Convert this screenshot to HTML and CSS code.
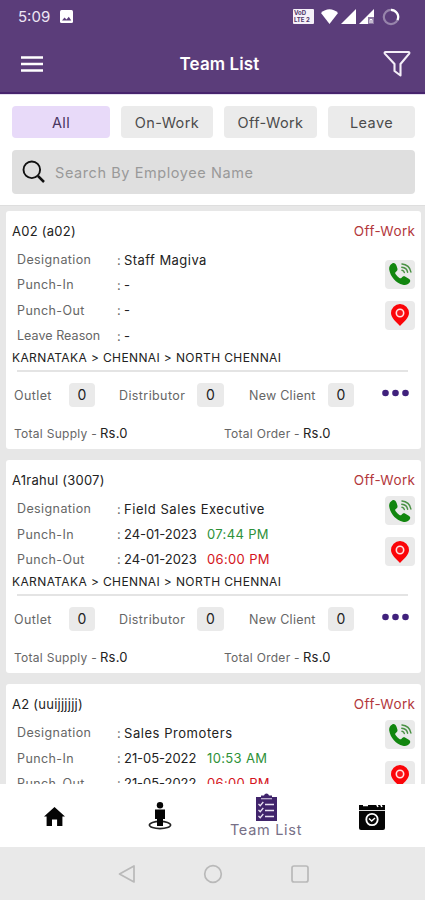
FILE: index.html
```html
<!DOCTYPE html>
<html lang="en">
<head>
<meta charset="UTF-8" />
<meta name="viewport" content="width=device-width, initial-scale=1" />
<title>Team List</title>
<link rel="stylesheet" href="styles.css">
</head>
<body>
  <!-- Shared icons -->
  <svg class="sprite" aria-hidden="true">
    <symbol id="icon-phone" viewBox="0 0 24 24">
      <path fill="#12860f" d="M4.200 1.400C6 .6 7.800 1.500 8.600 4l.8 2.600c.4 1.600-.2 2.600-1.900 3.600-.5.500-.3 1.200.2 2.100 1 1.600 2.200 2.800 3.700 3.700.9.500 1.500.5 2-.1 1.200-1.700 2.500-2.100 4-1.200l3.400 2c1.600 1 1.900 2.300.8 3.900-1.500 2.100-4 2.800-6.800 2.100C8.300 21.600 2.200 14.500 1.200 7.500.8 4.800 2 2.500 4.200 1.400z"/>
      <path fill="none" stroke="#4a9144" stroke-width="1.500" stroke-linecap="round" d="M14 2c4.600.2 8.300 3.600 8.900 8M13.800 5.200c3 .2 5.300 2.300 5.800 5M14 8.300c1.300.2 2.100 1 2.300 2.200"/>
    </symbol>
    <symbol id="icon-pin" viewBox="0 0 18 22">
      <path fill="#fb0509" d="M9 0a9 9 0 0 0-9 9c0 5 5.500 9 9 13 3.500-4 9-8 9-13a9 9 0 0 0-9-9z"/>
      <circle cx="9" cy="9" r="3.700" fill="#fb1519" stroke="#ffe2e2" stroke-width="1.600"/>
    </symbol>
    <symbol id="icon-dots" viewBox="0 0 27 8">
      <g fill="#40217c"><circle cx="3.500" cy="4" r="3.300"/><circle cx="13.500" cy="4" r="3.300"/><circle cx="23.500" cy="4" r="3.300"/></g>
    </symbol>
  </svg>

  <header class="app-header">
    <div class="status-bar">
      <span class="clock">5:09</span>
      <svg class="status-image" viewBox="0 0 13 13">
        <rect width="13" height="13" rx="1.500" fill="#fff"/>
        <path d="M2 10.500l2.500-3 2 1.900 2.300-2.600 2.500 3.700z" fill="#5b3d7a"/>
      </svg>
      <div class="status-icons">
        <div class="volte"><span>VoD</span><span>LTE 2</span></div>
        <svg width="17" height="15" viewBox="0 0 17 15"><path d="M0 4C5-.9 12-.9 17 4L8.500 15z" fill="#fff"/></svg>
        <svg width="15" height="15" viewBox="0 0 15 15"><path d="M15 0v15H0z" fill="#fff"/></svg>
        <svg width="16" height="15" viewBox="0 0 16 15"><path d="M15 0v15H0z" fill="#fff"/><path d="M9 8h6v7H9z" fill="#8d78a3"/><path d="M11 14v-3.500h2V14" fill="none" stroke="#fff"/></svg>
        <svg class="spinner" width="18" height="18" viewBox="0 0 18 18"><circle cx="9" cy="9" r="7.200" fill="none" stroke="#9784ab" stroke-width="2.200"/><path d="M9 1.800A7.200 7.200 0 0 1 15.500 12" fill="none" stroke="#fff" stroke-width="2.200"/></svg>
      </div>
    </div>
    <div class="title-bar">
      <button class="icon-btn" aria-label="Menu">
        <svg width="22" height="16" viewBox="0 0 22 16"><path d="M0 1.500h22M0 8h22M0 14.500h22" stroke="#fff" stroke-width="2.300"/></svg>
      </button>
      <h1>Team List</h1>
      <button class="icon-btn" aria-label="Filter">
        <svg width="28" height="28" viewBox="0 0 28 28"><path d="M2.500 2h23c.7 0 1.200.9.700 1.600L17.500 14v11.500L11.500 21v-7L1.800 3.600C1.300 2.900 1.800 2 2.500 2z" fill="none" stroke="#f4eef8" stroke-width="2.100" stroke-linejoin="round"/></svg>
      </button>
    </div>
  </header>

  <section class="filters">
    <div class="chips">
      <button class="chip active">All</button>
      <button class="chip">On-Work</button>
      <button class="chip">Off-Work</button>
      <button class="chip">Leave</button>
    </div>
    <div class="search">
      <svg width="24" height="24" viewBox="0 0 24 24"><circle cx="9.800" cy="9.800" r="8.300" fill="none" stroke="#111" stroke-width="1.900"/><path d="M16 16l6 6" stroke="#111" stroke-width="2.500"/></svg>
      <span>Search By Employee Name</span>
    </div>
  </section>

  <main class="team-list">
    <article class="card">
      <div class="card-head"><h2>A02 (a02)</h2><span class="status">Off-Work</span></div>
      <div class="card-body">
        <dl class="details">
          <dt>Designation</dt><dd><b>Staff Magiva</b></dd>
          <dt>Punch-In</dt><dd><b>-</b></dd>
          <dt>Punch-Out</dt><dd><b>-</b></dd>
          <dt class="tight">Leave Reason</dt><dd><b>-</b></dd>
        </dl>
        <div class="actions">
          <button class="action"><svg width="24" height="24"><use href="#icon-phone"/></svg></button>
          <button class="action"><svg width="18" height="22"><use href="#icon-pin"/></svg></button>
        </div>
      </div>
      <p class="region">KARNATAKA &gt; CHENNAI &gt; NORTH CHENNAI</p>
      <hr>
      <div class="stats">
        <span>Outlet</span><b>0</b>
        <span>Distributor</span><b>0</b>
        <span>New Client</span><b>0</b>
        <svg class="more" width="27" height="8"><use href="#icon-dots"/></svg>
      </div>
      <div class="totals">
        <p><span>Total Supply -</span> <b>Rs.0</b></p>
        <p class="order"><span>Total Order -</span> <b>Rs.0</b></p>
      </div>
    </article>

    <article class="card">
      <div class="card-head"><h2>A1rahul (3007)</h2><span class="status">Off-Work</span></div>
      <div class="card-body">
        <dl class="details">
          <dt>Designation</dt><dd><b class="wide">Field Sales Executive</b></dd>
          <dt>Punch-In</dt><dd><b class="date">24-01-2023</b><span class="time in">07:44 PM</span></dd>
          <dt>Punch-Out</dt><dd><b class="date">24-01-2023</b><span class="time out">06:00 PM</span></dd>
        </dl>
        <div class="actions">
          <button class="action"><svg width="24" height="24"><use href="#icon-phone"/></svg></button>
          <button class="action"><svg width="18" height="22"><use href="#icon-pin"/></svg></button>
        </div>
      </div>
      <p class="region">KARNATAKA &gt; CHENNAI &gt; NORTH CHENNAI</p>
      <hr>
      <div class="stats">
        <span>Outlet</span><b>0</b>
        <span>Distributor</span><b>0</b>
        <span>New Client</span><b>0</b>
        <svg class="more" width="27" height="8"><use href="#icon-dots"/></svg>
      </div>
      <div class="totals">
        <p><span>Total Supply -</span> <b>Rs.0</b></p>
        <p class="order"><span>Total Order -</span> <b>Rs.0</b></p>
      </div>
    </article>

    <article class="card">
      <div class="card-head"><h2>A2 (uuijjjjjj)</h2><span class="status">Off-Work</span></div>
      <div class="card-body">
        <dl class="details">
          <dt>Designation</dt><dd><b class="wide">Sales Promoters</b></dd>
          <dt>Punch-In</dt><dd><b class="date">21-05-2022</b><span class="time in">10:53 AM</span></dd>
          <dt>Punch-Out</dt><dd><b class="date">21-05-2022</b><span class="time out">06:00 PM</span></dd>
        </dl>
        <div class="actions">
          <button class="action"><svg width="24" height="24"><use href="#icon-phone"/></svg></button>
          <button class="action"><svg width="18" height="22"><use href="#icon-pin"/></svg></button>
        </div>
      </div>
    </article>
  </main>

  <nav class="tab-bar">
    <a class="tab"><svg width="21" height="19" viewBox="0 0 21 19"><path d="M10.500 0L21 9.500h-2.600V19h-5.300v-6.500H8V19H2.600V9.500H0z" fill="#050505"/></svg></a>
    <a class="tab"><svg width="24" height="28" viewBox="0 0 24 28">
      <ellipse cx="12" cy="23" rx="10.600" ry="3.600" fill="none" stroke="#222" stroke-width="1.600"/>
      <circle cx="12" cy="3.300" r="3.200" fill="#050505"/><path d="M7 7.500h10V17h-2v7H9v-7H7z" fill="#050505"/>
    </svg></a>
    <a class="tab current">
      <svg width="21" height="28" viewBox="0 0 21 28">
        <path d="M0 4h5V2.500h3a2.600 2.600 0 0 1 5 0h3V4h5v24H0z" fill="#40246b"/>
        <path d="M5 5.700h11" stroke="#c6bad4" stroke-width="1.200"/>
        <path d="M9 11.500h9M9 17.500h9M9 23.500h9" stroke="#e9e2f2" stroke-width="1.500"/>
        <path d="M2.500 11l1.700 1.700L7.300 9M2.500 17l1.700 1.700L7.300 15M2.500 23l1.700 1.700L7.300 21" fill="none" stroke="#e9e2f2" stroke-width="1.300"/>
      </svg>
      <span>Team List</span>
    </a>
    <a class="tab"><svg width="26" height="27" viewBox="0 0 26 27">
      <path d="M0 2h26v23a2 2 0 0 1-2 2H2a2 2 0 0 1-2-2z" fill="#050505"/>
      <path d="M0 7.500h26" stroke="#ddd" stroke-width="1"/>
      <path d="M4 2.500h5M17 0l2 4M21 0l2 4" stroke="#fff" stroke-width="1.600"/>
      <circle cx="13" cy="16.500" r="5.700" fill="none" stroke="#fff" stroke-width="1.800"/>
      <path d="M10 15.500l2.700 2.500 3.300-3" fill="none" stroke="#fff" stroke-width="1.500"/>
    </svg></a>
  </nav>

  <footer class="system-nav">
    <svg width="18" height="20" viewBox="0 0 18 20"><path d="M16 2v16L1.500 10z" fill="none" stroke="#b9b9b9" stroke-width="1.700" stroke-linejoin="round"/></svg>
    <svg width="20" height="20" viewBox="0 0 20 20"><circle cx="10" cy="10" r="8.300" fill="none" stroke="#b9b9b9" stroke-width="1.700"/></svg>
    <svg width="20" height="20" viewBox="0 0 20 20"><rect x="2" y="2" width="16" height="16" rx="2" fill="none" stroke="#b9b9b9" stroke-width="1.700"/></svg>
  </footer>
</body>
</html>
```
FILE: styles.css
```css
/* Reset & base */
*, *::before, *::after {
  box-sizing: border-box;
}

body {
  margin: 0;
  height: 900px;
  display: flex;
  flex-direction: column;
  overflow: hidden;
  font-family: Inter, 'Open Sans', sans-serif;
  font-size: 12px;
  color: #222;
  background: #e7e7e7;
}

h1, h2, p, dl, dd {
  margin: 0;
}

b {
  font-weight: 400;
}

svg {
  display: block;
  flex-shrink: 0;
}

button {
  border: 0;
  padding: 0;
  font-family: inherit;
  background: none;
}

.sprite {
  position: absolute;
  width: 0;
  height: 0;
}

/* Header */
.app-header {
  flex: 0 0 95px;
  background: #5b3d7a;
  border-bottom: 1px solid #e6e0f0;
  box-shadow: inset 0 -2px 0 #47246d;
  color: #fff;
}

.status-bar {
  display: flex;
  align-items: center;
  height: 33px;
  padding: 0 25px 0 18px;
}

.clock {
  width: 42px;
  font-size: 15px;
  letter-spacing: 0;
  color: #eee6f4;
}

.status-image {
  width: 13px;
  height: 13px;
}

.status-icons {
  display: flex;
  align-items: center;
  gap: 3px;
  margin-left: auto;
}

.volte {
  width: 21px;
  height: 15px;
  margin-right: 4px;
  padding: 1px;
  border-radius: 1px;
  background: #f5f0f8;
  color: #4d3468;
  font-size: 6px;
  font-weight: 700;
  line-height: 6.5px;
}

.volte span {
  display: block;
  white-space: nowrap;
}

.spinner {
  margin-left: 4px;
}

.title-bar {
  display: flex;
  align-items: center;
  justify-content: space-between;
  height: 61px;
  padding: 0 14px 0 21px;
}

.title-bar h1 {
  padding-left: 13px;
  font-size: 17px;
  font-weight: 600;
  letter-spacing: 0.1px;
}

/* Filters */
.filters {
  flex: 0 0 111px;
  padding: 11px 10px 0 12px;
  background: #fff;
  border-bottom: 1px solid #dedede;
}

.chips {
  display: grid;
  grid-template-columns: 98px 92px 93px 87px;
  gap: 11px;
}

.chip {
  height: 32px;
  border-radius: 4px;
  background: #ebebeb;
  color: #4b4b4b;
  font-size: 14.5px;
  letter-spacing: 0.4px;
}

.chip.active {
  background: #e8daf9;
  color: #49355f;
}

.search {
  display: flex;
  align-items: center;
  gap: 9px;
  height: 44px;
  margin-top: 12px;
  padding-left: 10px;
  border-radius: 4px;
  background: #dfdfdf;
  color: #999;
  font-size: 14.5px;
  letter-spacing: 0.58px;
}

/* Cards */
.team-list {
  flex: 1;
  min-height: 0;
  overflow: hidden;
  padding: 5px 4px 0 6px;
}

.card {
  margin-bottom: 11px;
  padding: 10px 6px 7px;
  border-radius: 3px;
  background: #fff;
}

.card-head {
  display: flex;
  justify-content: space-between;
  align-items: center;
  height: 20px;
}

.card-head h2 {
  font-size: 13px;
  font-weight: 400;
  letter-spacing: 0.25px;
}

.status {
  color: #b3383c;
  font-size: 13.5px;
  letter-spacing: 0.4px;
  margin-right: -0.4px;
}

.card-body {
  display: flex;
  justify-content: space-between;
  align-items: center;
  margin-top: 6px;
}

.details {
  display: grid;
  grid-template-columns: 100px 1fr;
  grid-auto-rows: 25.3px;
  align-items: center;
  padding-left: 5px;
}

.details dt {
  color: #666;
  font-size: 12.5px;
  letter-spacing: 0.4px;
}

.details .tight {
  letter-spacing: 0.05px;
}

.details dd {
  display: flex;
  font-size: 13px;
  letter-spacing: 0.45px;
  white-space: nowrap;
}

.details dd::before {
  content: ":";
  width: 7px;
  color: #666;
}

.details .wide {
  letter-spacing: 0.55px;
}

.date {
  width: 83px;
  letter-spacing: -0.05px;
}

.time {
  letter-spacing: 0.35px;
}

.in {
  color: #2d9138;
}

.out {
  color: #d41420;
}

.actions {
  display: flex;
  flex-direction: column;
  gap: 12px;
  margin-bottom: 6px;
}

.action {
  display: flex;
  align-items: center;
  justify-content: center;
  width: 30px;
  height: 29px;
  border-radius: 4px;
  background: #eaeaea;
}

.region {
  height: 18px;
  line-height: 19px;
  font-size: 12px;
  letter-spacing: 0.38px;
  white-space: nowrap;
}

hr {
  height: 2px;
  margin: 4px 7px 11px 5px;
  border: 0;
  background: #e4e4e4;
}

.stats {
  display: grid;
  grid-template-columns: 55px 26px 24px 78px 27px 25px 79px 26px 28px 27px;
  align-items: center;
  height: 24px;
  padding-left: 2px;
  color: #666;
  font-size: 12.5px;
  letter-spacing: 0.4px;
  white-space: nowrap;
}

.stats span:nth-of-type(2) {
  grid-column: 4;
}

.stats span:nth-of-type(3) {
  grid-column: 7;
  letter-spacing: 0.25px;
}

.stats b {
  height: 24px;
  border-radius: 4px;
  background: #eaeaea;
  color: #222;
  font-size: 14px;
  line-height: 24px;
  text-align: center;
}

.more {
  grid-column: 10;
  margin-bottom: 5px;
}

.totals {
  display: grid;
  grid-template-columns: 210px 1fr;
  height: 18px;
  margin-top: 17px;
  padding-left: 2px;
  line-height: 19px;
}

.totals p {
  display: flex;
}

.totals span {
  width: 86px;
  color: #666;
  letter-spacing: 0.28px;
}

.totals .order span {
  width: 79px;
}

.totals b {
  font-size: 13px;
  letter-spacing: 0.2px;
}

/* Bottom tabs */
.tab-bar {
  flex: 0 0 63px;
  display: grid;
  grid-template-columns: repeat(4, 1fr);
  padding: 1px 0 0 1px;
  background: #fff;
}

.tab {
  display: flex;
  flex-direction: column;
  align-items: center;
  justify-content: center;
}

.current {
  color: #777087;
  font-size: 14.5px;
  line-height: 18px;
  letter-spacing: 0.7px;
}

/* Android navigation */
.system-nav {
  flex: 0 0 53px;
  display: flex;
  align-items: center;
  justify-content: center;
  gap: 67px;
  padding-left: 2px;
  background: #e9e9e9;
}
```
